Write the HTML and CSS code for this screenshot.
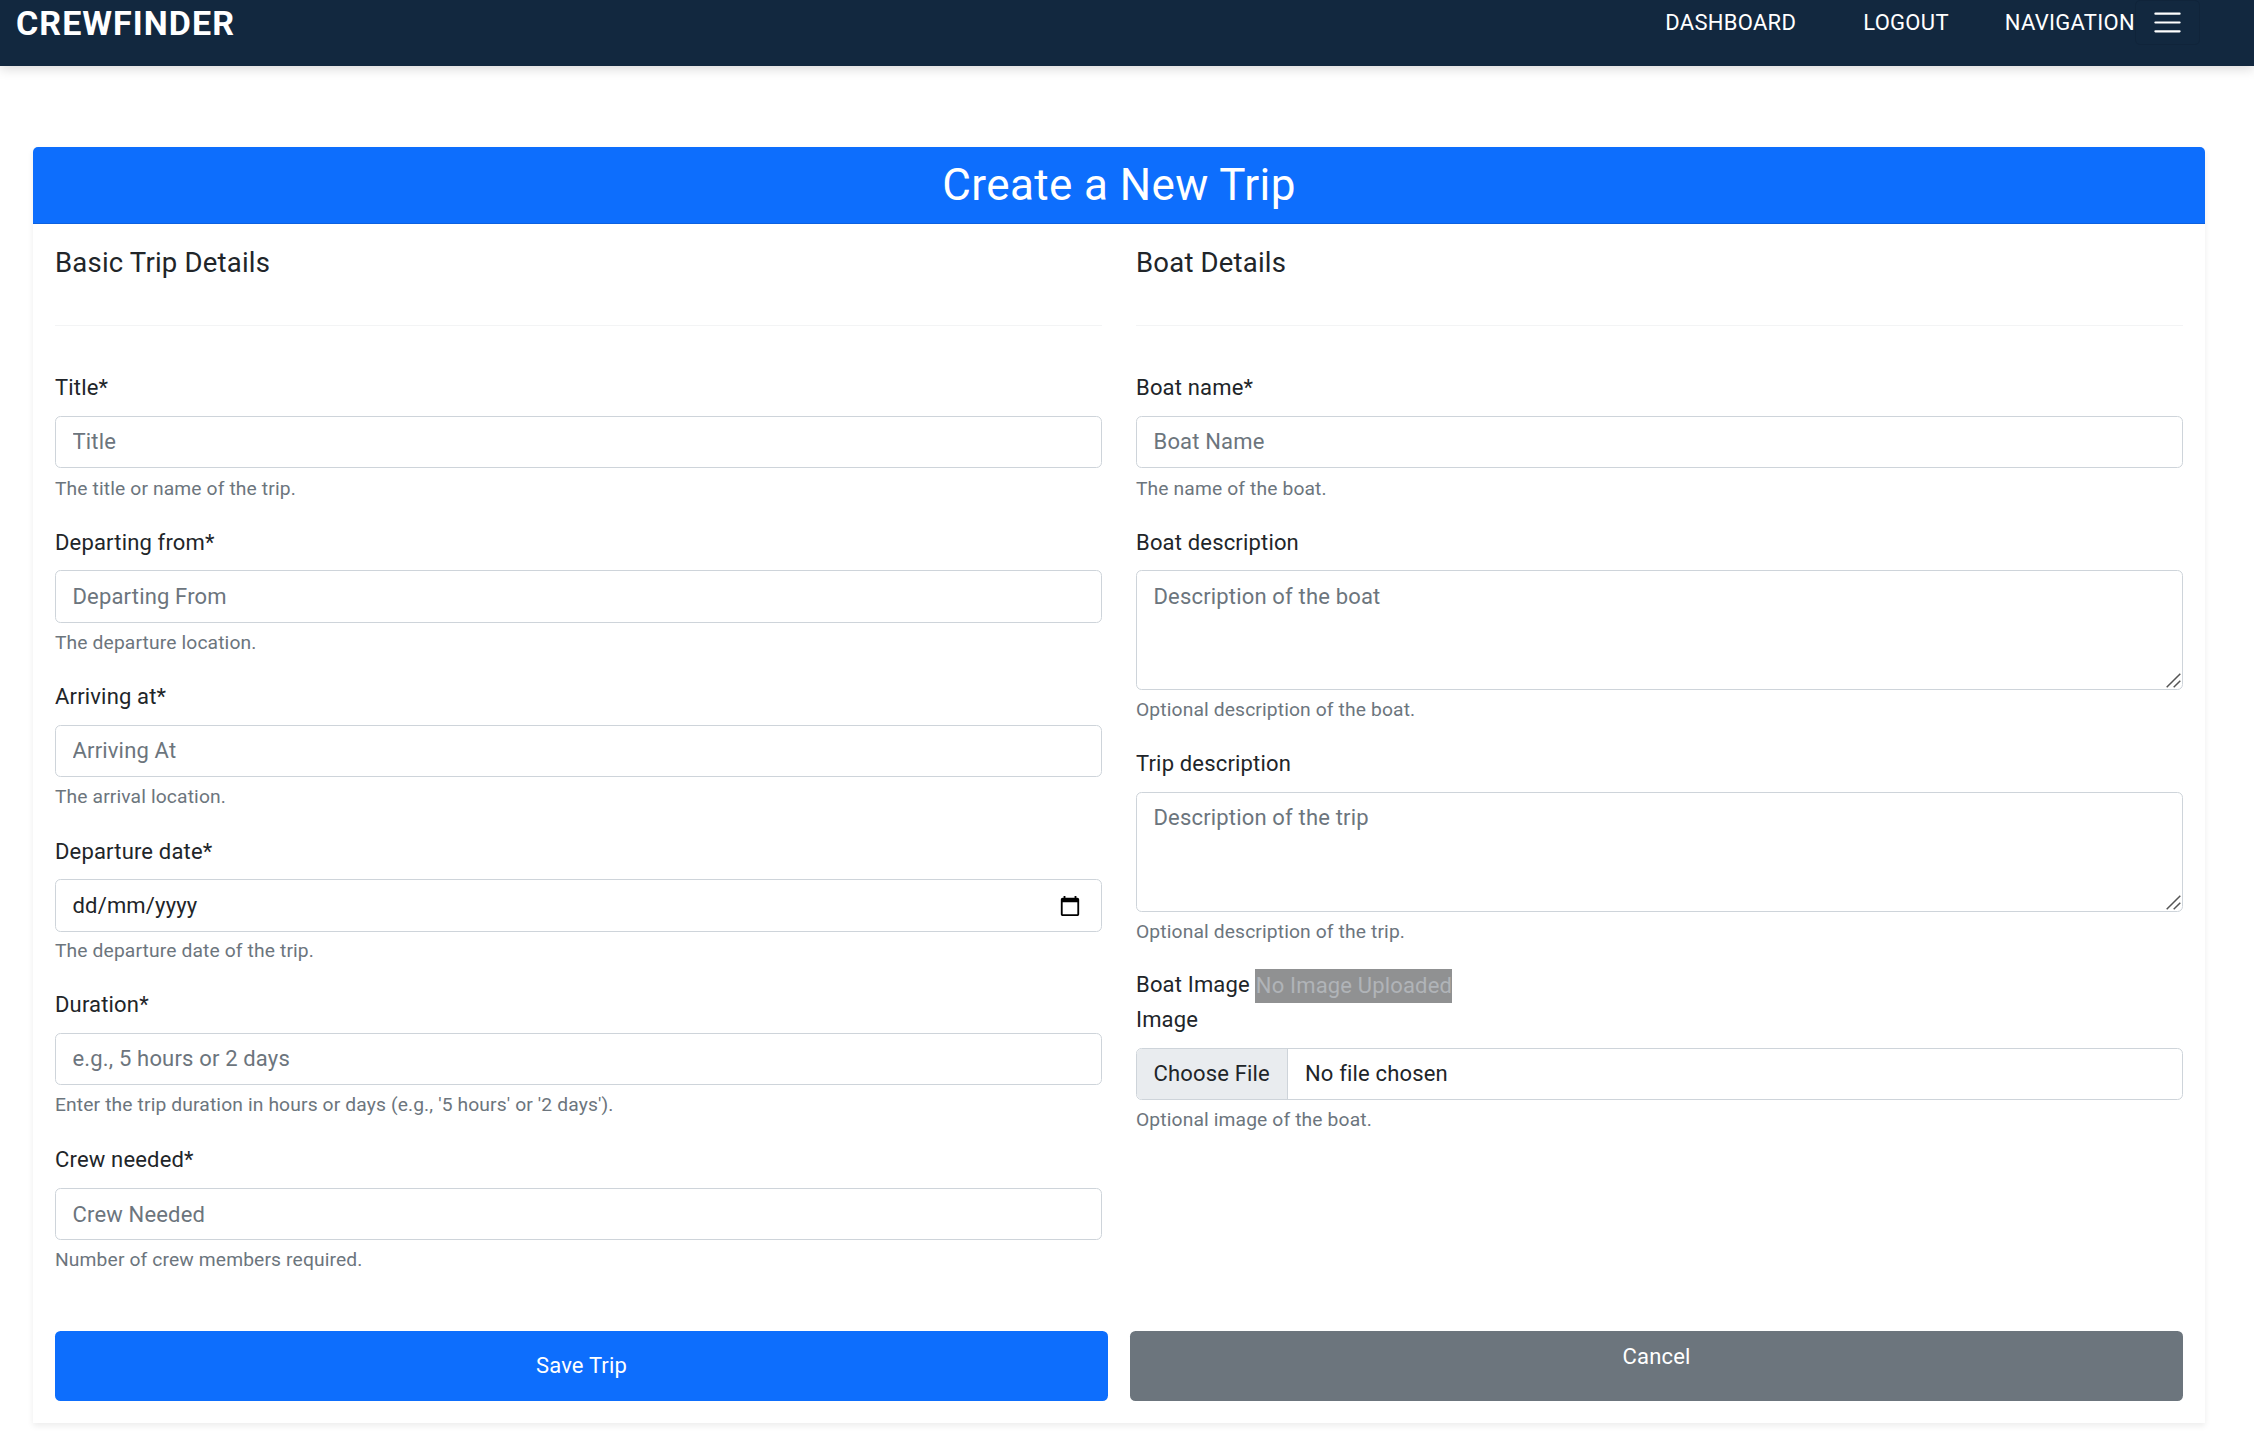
FILE: index.html
```html
<!DOCTYPE html>
<html lang="en">
<head>
<meta charset="utf-8">
<title>Crewfinder - Create a New Trip</title>
<link rel="stylesheet" href="styles.css">
</head>
<body>
<header class="navbar">
  <a class="brand">CREWFINDER</a>
  <nav class="links">
    <a class="link dashboard">DASHBOARD</a>
    <a class="link logout">LOGOUT</a>
    <a class="link">NAVIGATION</a>
    <button class="toggler" type="button" aria-label="Menu">
      <svg width="33" height="33" viewBox="0 0 30 30"><path stroke="#fff" stroke-linecap="round" stroke-miterlimit="10" stroke-width="2" d="M4 7h22M4 15h22M4 23h22"/></svg>
    </button>
  </nav>
</header>
<main class="card">
  <h1 class="card-title">Create a New Trip</h1>
  <form class="card-body">
    <div class="columns">
      <section>
        <h2 class="section-title">Basic Trip Details</h2>
        <div class="group first"><label class="label">Title*</label><input class="control" placeholder="Title"><div class="help">The title or name of the trip.</div></div>
        <div class="group"><label class="label">Departing from*</label><input class="control" placeholder="Departing From"><div class="help">The departure location.</div></div>
        <div class="group arrival-group"><label class="label">Arriving at*</label><input class="control" placeholder="Arriving At"><div class="help">The arrival location.</div></div>
        <div class="group date-group"><label class="label">Departure date*</label>
          <div class="control date"><span>dd/mm/yyyy</span>
            <svg width="22" height="22" viewBox="0 0 24 24"><path d="M20 3h-1V1h-2v2H7V1H5v2H4c-1.100 0-2 .9-2 2v16c0 1.100.9 2 2 2h16c1.100 0 2-.9 2-2V5c0-1.100-.9-2-2-2zm0 18H4V8h16v13z"/></svg>
          </div>
          <div class="help">The departure date of the trip.</div></div>
        <div class="group duration-group"><label class="label">Duration*</label><input class="control" placeholder="e.g., 5 hours or 2 days"><div class="help">Enter the trip duration in hours or days (e.g., '5 hours' or '2 days').</div></div>
        <div class="group crew-group"><label class="label">Crew needed*</label><input class="control" placeholder="Crew Needed"><div class="help">Number of crew members required.</div></div>
      </section>
      <section>
        <h2 class="section-title">Boat Details</h2>
        <div class="group first"><label class="label">Boat name*</label><input class="control" placeholder="Boat Name"><div class="help">The name of the boat.</div></div>
        <div class="group boat-desc"><label class="label">Boat description</label>
          <div class="area"><textarea class="control" placeholder="Description of the boat"></textarea><svg class="grip" width="15" height="15" viewBox="0 0 15 15"><path d="M.7 14.300 14.300.7M7.700 14.300l6.600-6.600"/></svg></div>
          <div class="help">Optional description of the boat.</div></div>
        <div class="group trip-desc"><label class="label">Trip description</label>
          <div class="area"><textarea class="control" placeholder="Description of the trip"></textarea><svg class="grip" width="15" height="15" viewBox="0 0 15 15"><path d="M.7 14.300 14.300.7M7.700 14.300l6.600-6.600"/></svg></div>
          <div class="help">Optional description of the trip.</div></div>
        <div class="image-row"><span>Boat Image</span><span class="no-image">No Image Uploaded</span></div>
        <div class="group"><label class="label">Image</label>
          <div class="control file"><span class="file-button">Choose File</span><span>No file chosen</span></div>
          <div class="help">Optional image of the boat.</div></div>
      </section>
    </div>
    <div class="actions">
      <button class="btn save" type="button">Save Trip</button>
      <a class="btn cancel">Cancel</a>
    </div>
  </form>
</main>
</body>
</html>
```
FILE: styles.css
```css
* { box-sizing: border-box; }

body {
  margin: 0;
  height: 1440px;
  overflow: hidden;
  background: #fff;
  color: #212529;
  font: 400 22px/33px Roboto, sans-serif;
  letter-spacing: .17px;
}

.navbar {
  display: flex;
  justify-content: space-between;
  height: 66px;
  padding: 0 54px 0 16px;
  background: #12283f;
  color: #fff;
  box-shadow: 0 3px 11px rgba(0, 0, 0, .15);
}

.brand { font-size: 34px; font-weight: 700; line-height: 46px; letter-spacing: 1.05px; }
.links { display: flex; height: 45px; line-height: 46px; letter-spacing: .3px; }
.dashboard { margin-right: 67px; }
.logout { margin-right: 56px; }

.toggler {
  display: flex;
  align-items: center;
  justify-content: center;
  width: 65px;
  height: 45px;
  padding: 0;
  border: 1px solid #10243a;
  border-radius: 5px;
  background: none;
}

.card {
  width: 2172px;
  height: 1276px;
  margin: 81px 0 0 33px;
  border-radius: 5px 5px 0 0;
  background: #fff;
  box-shadow: 0 3px 6px rgba(0, 0, 0, .075);
}

.card-title {
  height: 77px;
  margin: 0;
  padding-top: 12px;
  border-bottom: 1px solid #0c61e0;
  border-radius: 5px 5px 0 0;
  background: #0d6efd;
  color: #fff;
  font-size: 44px;
  font-weight: 400;
  line-height: 53px;
  letter-spacing: .4px;
  text-align: center;
}

.card-body { padding: 22px 22px 0; }

.columns {
  display: grid;
  grid-template-columns: 1fr 1fr;
  column-gap: 34px;
  height: 1085px;
}

.section-title {
  height: 80px;
  margin: 0 0 45.3px;
  border-bottom: 1px solid #f3f4f5;
  font-size: 27.5px;
  font-weight: 400;
  line-height: 33px;
  letter-spacing: .2px;
}

.group { height: 154.4px; }
.label { display: block; margin-bottom: 11.5px; }

.control {
  display: block;
  width: 100%;
  height: 52.5px;
  margin: 0;
  padding: 8.25px 16.5px;
  border: 1px solid #ced4da;
  border-radius: 5.5px;
  background: #fff;
  color: #212529;
  font: inherit;
  letter-spacing: inherit;
  resize: none;
}
.control::placeholder { color: #6c757d; opacity: 1; }

.help {
  margin-top: 6.2px;
  color: #6c757d;
  font-size: 19.25px;
  line-height: 28.875px;
  letter-spacing: .13px;
}

.first .label { margin-bottom: 11.3px; }
.first .control { height: 52.25px; }
.first .help { margin-top: 6.7px; }

.date { display: flex; align-items: center; justify-content: space-between; padding-right: 20px; }
.arrival-group { height: 154.7px; }
.date-group { height: 153.3px; }
.date-group .help { margin-top: 5px; }
.duration-group { height: 154.9px; }
.crew-group .label { margin-bottom: 12px; }
.crew-group .control { height: 52.25px; }

.area { position: relative; }
.area .control { height: 119.75px; padding-top: 8.4px; }
.grip {
  position: absolute;
  right: 2px;
  bottom: 2px;
  fill: none;
  stroke: #555;
  stroke-width: 1.5;
}
.boat-desc { height: 221.8px; }
.trip-desc { height: 220.2px; }

.image-row { display: flex; gap: 5px; height: 35.5px; }
.no-image {
  height: 34px;
  margin-top: 1px;
  padding-left: 1px;
  background: #909192;
  color: #b0b4b8;
}

.file { display: flex; gap: 17px; padding: 0; overflow: hidden; line-height: 50px; }
.file-button {
  width: 151px;
  padding-left: 16.5px;
  border-right: 1px solid #ced4da;
  background: #e9ecef;
}

.actions { display: grid; grid-template-columns: 1fr 1fr; gap: 22px; height: 70px; }
.btn {
  border: 0;
  border-radius: 5.5px;
  color: #fff;
  font: inherit;
  letter-spacing: inherit;
  text-align: center;
}
.save { padding: 0 0 2px; background: #0d6efd; }
.cancel { padding-top: 9px; background: #6c757d; }
```
